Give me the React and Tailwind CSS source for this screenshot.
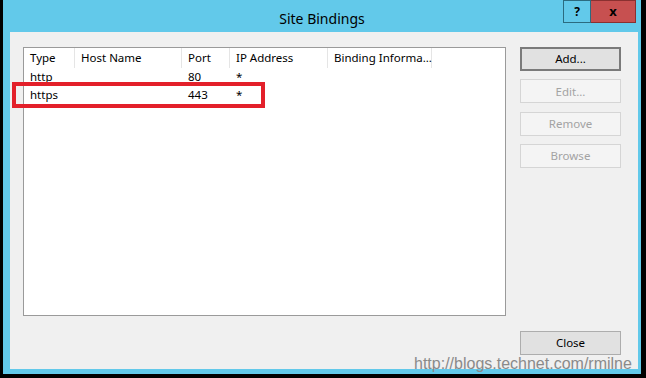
export default function App() {
  const font = { fontFamily: '"Noto Sans", "Open Sans", sans-serif' };
  const cols = [
    { label: "Type", w: "w-[51px]" },
    { label: "Host Name", w: "w-[107px]" },
    { label: "Port", w: "w-[48px]" },
    { label: "IP Address", w: "w-[98px]" },
    { label: "Binding Informa...", w: "w-[104px]" },
  ];
  const rows = [
    ["http", "", "80", "*", ""],
    ["https", "", "443", "*", ""],
  ];
  return (
    <div className="relative w-[646px] h-[378px] bg-black pl-[3px] pr-[5px] pb-[4px] overflow-hidden" style={font}>
      <div className="w-full h-full bg-[#62c9ea] flex flex-col pl-[7px] pr-[3px] pb-[5px]">
        <div className="h-[32px] grid grid-cols-[1fr_auto_1fr] -ml-[7px] -mr-[3px]">
          <div />
          <div className="pt-[9px] text-[14px] leading-[20px] text-black">Site Bindings</div>
          <div className="flex justify-end items-start pr-[5px]">
            <div className="w-[28px] h-[23px] bg-[#62c9ea] border border-[#2b6b80] flex items-center justify-center text-[12px] font-bold text-black">?</div>
            <div className="w-[45px] h-[23px] bg-[#c75050] border border-[#8a3030] border-l-0 flex items-center justify-center text-[13px] font-bold text-black">x</div>
          </div>
        </div>
        <div className="flex-1 bg-[#f0f0f0] pt-[15px] pl-[13px] pr-[17px] flex flex-col">
          <div className="flex gap-[14px]">
            <div className="w-[483px] h-[269px] bg-white border border-[#9a9a9a] text-[11.5px] text-black">
              <div className="flex h-[20px] items-center">
                {cols.map((c) => (
                  <div key={c.label} className={`${c.w} h-full border-r border-[#e5e5e5] pl-[6px] flex items-center whitespace-nowrap`}>
                    {c.label}
                  </div>
                ))}
              </div>
              {rows.map((r, i) => (
                <div key={i} className="flex h-[18px] items-center">
                  {r.map((v, j) => (
                    <div key={j} className={`${cols[j].w} pl-[6px] whitespace-nowrap`}>{v}</div>
                  ))}
                </div>
              ))}
            </div>
            <div className="w-[101px] flex flex-col gap-[8.3px] text-[11.5px]">
              <div className="h-[24px] bg-[#e1e1e1] border-2 border-[#7a7a7a] flex items-center justify-center text-black">Add...</div>
              <div className="h-[24px] bg-[#f4f4f4] border border-[#d5d5d5] flex items-center justify-center text-[#a3a3a3]">Edit...</div>
              <div className="h-[24px] bg-[#f4f4f4] border border-[#d5d5d5] flex items-center justify-center text-[#a3a3a3]">Remove</div>
              <div className="h-[24px] bg-[#f4f4f4] border border-[#d5d5d5] flex items-center justify-center text-[#a3a3a3]">Browse</div>
            </div>
          </div>
          <div className="flex justify-end mt-[15px]">
            <div className="w-[101px] h-[24px] bg-[#e1e1e1] border border-[#adadad] flex items-center justify-center text-[11.5px] text-black">Close</div>
          </div>
        </div>
      </div>
      <div className="absolute left-[12px] top-[82px] w-[253px] h-[26px] border-[4px] border-[#e3202a]" />
      <div className="absolute left-[414px] top-[356px] text-[16px] leading-none text-[#8a8a8a]" style={{ fontFamily: '"Liberation Sans", Arial, sans-serif' }}>
        http://blogs.technet.com/rmilne
      </div>
    </div>
  );
}
